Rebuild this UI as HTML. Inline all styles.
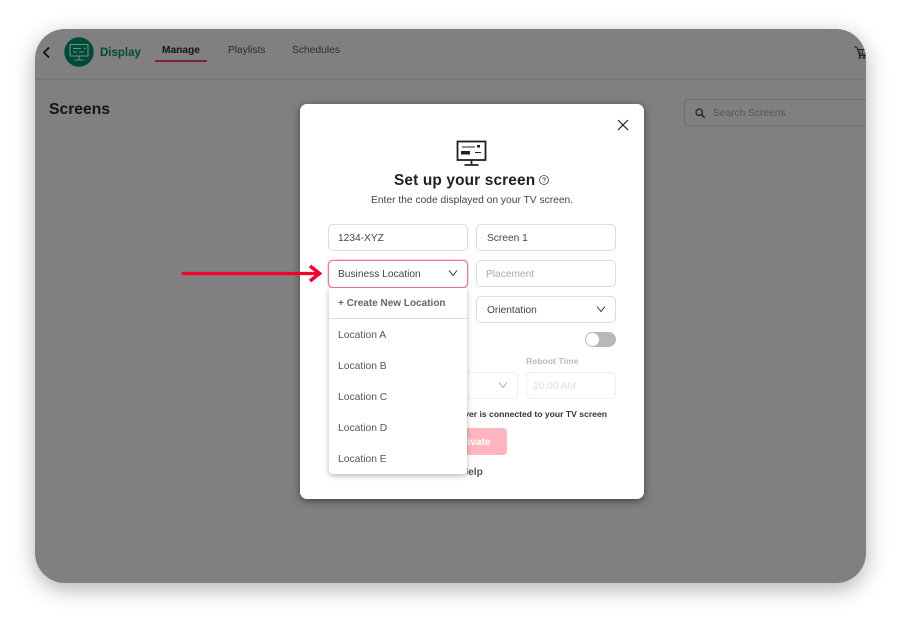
<!DOCTYPE html>
<html><head><meta charset="utf-8">
<style>
html,body{margin:0;padding:0;background:#fff;}
body{width:900px;height:623px;position:relative;overflow:hidden;font-family:"Liberation Sans",sans-serif;}
#frame{position:absolute;left:35px;top:29px;width:831px;height:554px;border-radius:30px;background:#808080;box-shadow:0 6px 22px rgba(0,0,0,.3);}
#clip{position:absolute;left:35px;top:29px;width:831px;height:554px;border-radius:30px;overflow:hidden;}
.t{position:absolute;white-space:nowrap;line-height:14px;filter:blur(.3px);}
.box{position:absolute;box-sizing:border-box;border:1px solid #dcdcdc;border-radius:5px;background:#fff;}
svg{position:absolute;overflow:visible;}
</style></head><body>
<div id="frame"></div>
<div id="clip">
  <div style="position:absolute;left:0;top:50px;width:831px;height:1px;background:#747474"></div>
  <svg style="left:7px;top:17px" width="10" height="14" viewBox="0 0 10 14"><path d="M7 1.500L2 6.500L7 11.500" fill="none" stroke="#111" stroke-width="1.800"/></svg>
  <svg style="left:29px;top:8px" width="30" height="30" viewBox="0 0 30 30"><circle cx="15" cy="15" r="14.700" fill="#004a38"/><g fill="none" stroke="#6f8f86" stroke-width="1.100"><rect x="6" y="7.500" width="18" height="11.500" rx=".8"/><path d="M15 19v3.500M10.500 23h9M9 11.500h8M9 15h4M15 15h5"/></g><path d="M20 11.500h1.500" stroke="#6f8f86" stroke-width="1.500"/></svg>
  <div class="t" style="left:65px;top:17px;font-size:11.500px;font-weight:bold;color:#004a38">Display</div>
  <div class="t" style="left:127px;top:15px;font-size:10.200px;font-weight:bold;color:#141414">Manage</div>
  <div style="position:absolute;left:120px;top:31px;width:52px;height:2px;background:#802030"></div>
  <div class="t" style="left:193px;top:15px;font-size:10.200px;color:#2b2b2b">Playlists</div>
  <div class="t" style="left:257px;top:15px;font-size:10.300px;color:#2b2b2b">Schedules</div>
  <svg style="left:819px;top:17px" width="12" height="14" viewBox="0 0 12 14"><path d="M0 .5L3 1.500L5.500 9.500H12M3.500 3.500H12V8H5" fill="none" stroke="#222" stroke-width="1.100"/><path d="M6 4V8M8.500 4V8" stroke="#222" stroke-width=".8"/><circle cx="6" cy="11.500" r="1.300" fill="#222"/><circle cx="10" cy="11.500" r="1.300" fill="#222"/></svg>
  <div class="t" style="left:14px;top:72px;font-size:15.700px;line-height:18px;font-weight:bold;color:#141414">Screens</div>
  <div style="position:absolute;box-sizing:border-box;left:649px;top:70px;width:200px;height:27px;border:1px solid #6f6f6f;border-radius:4px"></div>
  <svg style="left:660px;top:79px" width="11" height="11" viewBox="0 0 13 13"><circle cx="5" cy="5" r="3.800" fill="none" stroke="#222" stroke-width="1.500"/><path d="M7.800 7.800L11.500 11.500" stroke="#222" stroke-width="1.800"/></svg>
  <div class="t" style="left:678px;top:78px;font-size:10.200px;color:#555">Search Screens</div>
</div>

<div style="position:absolute;left:300px;top:104px;width:344px;height:395px;background:#fff;border-radius:7px;box-shadow:0 2px 8px rgba(0,0,0,.5)"></div>

<svg style="left:617px;top:119px" width="12" height="12" viewBox="0 0 12 12"><path d="M1 1L11 11M11 1L1 11" stroke="#222" stroke-width="1.200"/></svg>
<svg style="left:456px;top:140px" width="32" height="27" viewBox="0 0 32 27"><g fill="none" stroke="#222"><rect x="1.500" y="1.500" width="28" height="18.500" stroke-width="1.800"/><path d="M15.500 20v4M8.500 25h14" stroke-width="1.800"/><path d="M6 7h13M19 12.500h6" stroke-width="1.100"/></g><rect x="5" y="11" width="9" height="3.500" fill="#222"/><rect x="21" y="5" width="3" height="2.500" fill="#222"/></svg>
<div class="t" style="left:394px;top:171px;font-size:15.400px;line-height:20px;font-weight:bold;color:#222;letter-spacing:.15px">Set up your screen</div>
<svg style="left:539px;top:175px" width="10" height="10" viewBox="0 0 10 10"><circle cx="5" cy="5" r="4.500" fill="none" stroke="#444" stroke-width=".8"/><path d="M3.500 4C3.500 2.500 6.500 2.500 6.500 4C6.500 5 5 5 5 6.200" fill="none" stroke="#444" stroke-width=".8"/><circle cx="5" cy="7.500" r=".5" fill="#444"/></svg>
<div class="t" style="left:371px;top:194px;font-size:10.250px;color:#444">Enter the code displayed on your TV screen.</div>

<div class="box" style="left:328px;top:224px;width:140px;height:27px"></div>
<div class="t" style="left:338px;top:232px;font-size:10.200px;color:#444">1234-XYZ</div>
<div class="box" style="left:476px;top:224px;width:140px;height:27px"></div>
<div class="t" style="left:487px;top:232px;font-size:10.200px;color:#444">Screen 1</div>

<div class="box" style="left:328px;top:260px;width:140px;height:28px;border-color:#f2798b;box-shadow:0 0 0 .5px #f9a9b5"></div>
<div class="t" style="left:338px;top:268px;font-size:10.200px;color:#444">Business Location</div>
<svg style="left:448px;top:269px" width="10" height="8" viewBox="0 0 10 8"><path d="M1 1.500L5 6.500L9 1.500" fill="none" stroke="#333" stroke-width="1"/></svg>
<div class="box" style="left:476px;top:260px;width:140px;height:27px"></div>
<div class="t" style="left:486px;top:268px;font-size:10.200px;color:#aaa">Placement</div>

<div class="box" style="left:476px;top:296px;width:140px;height:27px"></div>
<div class="t" style="left:487px;top:304px;font-size:10.200px;color:#444">Orientation</div>
<svg style="left:596px;top:305px" width="10" height="8" viewBox="0 0 10 8"><path d="M1 1.500L5 6.500L9 1.500" fill="none" stroke="#333" stroke-width="1"/></svg>

<div style="position:absolute;left:585px;top:332px;width:31px;height:15px;border-radius:8px;background:#b8b8b8"></div>
<div style="position:absolute;left:586px;top:333px;width:13px;height:13px;border-radius:50%;background:#fff"></div>

<div class="t" style="left:526px;top:354px;font-size:8.700px;font-weight:bold;color:#bbb">Reboot Time</div>
<div class="box" style="left:440px;top:372px;width:78px;height:27px;border-color:#eee"></div>
<svg style="left:498px;top:381px" width="10" height="8" viewBox="0 0 10 8"><path d="M1 1.500L5 6.500L9 1.500" fill="none" stroke="#aaa" stroke-width="1"/></svg>
<div class="box" style="left:526px;top:372px;width:90px;height:27px;border-color:#eee"></div>
<div class="t" style="left:533px;top:380px;font-size:10.200px;color:#ddd">10:00 AM</div>
<div class="t" style="right:293px;top:407px;font-size:8.600px;font-weight:bold;color:#333">Make sure your player is connected to your TV screen</div>

<div style="position:absolute;left:400px;top:428px;width:107px;height:27px;border-radius:4px;background:#ffb5bf"></div>
<div class="t" style="left:451px;top:436px;font-size:10.200px;font-weight:bold;color:#fff">Activate</div>
<div class="t" style="left:433px;top:466px;font-size:10.200px;font-weight:bold;color:#555;clip-path:inset(-2px -2px -2px 34px)">Need Help</div>

<div style="position:absolute;left:329px;top:288px;width:138px;height:186px;background:#fff;border-radius:0 0 4px 4px;box-shadow:0 2px 6px rgba(0,0,0,.28)"></div>
<div style="position:absolute;left:329px;top:318px;width:138px;height:1px;background:#dcdcdc"></div>
<div class="t" style="left:338px;top:297px;font-size:10px;font-weight:bold;color:#666">+ Create New Location</div>
<div class="t" style="left:338px;top:329px;font-size:10.300px;color:#555">Location A</div>
<div class="t" style="left:338px;top:360px;font-size:10.300px;color:#555">Location B</div>
<div class="t" style="left:338px;top:391px;font-size:10.300px;color:#555">Location C</div>
<div class="t" style="left:338px;top:422px;font-size:10.300px;color:#555">Location D</div>
<div class="t" style="left:338px;top:453px;font-size:10.300px;color:#555">Location E</div>

<svg style="left:180px;top:262px" width="145" height="22" viewBox="0 0 145 22"><path d="M3 11.500H139" stroke="#f5002d" stroke-width="3.200" stroke-linecap="round"/><path d="M130 4L139.500 11.500L130 19" fill="none" stroke="#f5002d" stroke-width="3.500"/></svg>
</body></html>
